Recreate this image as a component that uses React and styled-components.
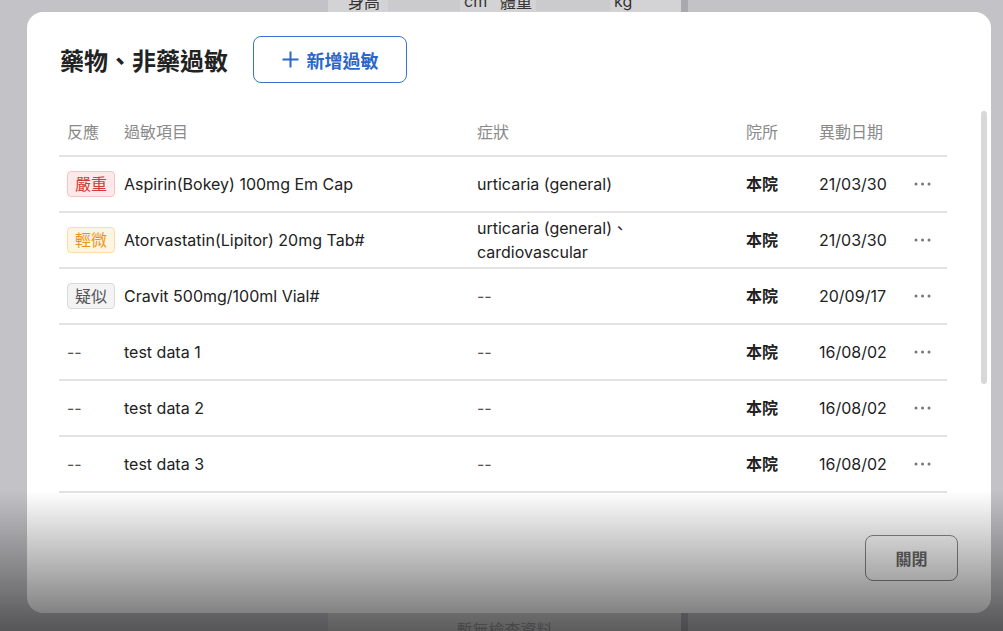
import React from 'react'
import styled, { createGlobalStyle } from 'styled-components'

const Global = createGlobalStyle`
  body {
    margin: 0;
    background: #c3c3c7;
    font-family: Inter, "Noto Sans CJK TC", sans-serif;
    overflow: hidden;
  }
  * { box-sizing: border-box; }
`

const BgPage = styled.div`
    display: flex;
    height: 100vh;
    padding-left: 328px;
`
const BgColumn = styled.div`
    width: 360px;
    background-color: #d3d3d5;
    border-right: 7px solid #a9a9ad;
    display: flex;
    flex-direction: column;
    justify-content: space-between;
    overflow: hidden;
`
const BgRow = styled.div`
    display: flex;
    align-items: center;
    height: 20px;
    margin-top: -9px;
    padding-left: 20px;
    font-size: 16px;
    color: #333;
`
const BgLabel = styled.span`
    width: ${p => p.w}px;
`
const BgInput = styled.div`
    width: ${p => p.w}px;
    height: 20px;
    background-color: #cbcbcd;
    margin-right: 4px;
`
const BgEmpty = styled.div`
    text-align: center;
    font-size: 16px;
    color: #9a9a9a;
    margin-bottom: -8px;
    height: 22px;
`

const Modal = styled.div`
    position: fixed;
    left: 27px;
    top: 12px;
    width: 964px;
    height: 601px;
    background-color: #ffffff;
    border-radius: 16px;
    display: flex;
    flex-direction: column;
    padding: 24px 44px 32px 32px;
`
const Header = styled.div`
    display: flex;
    align-items: center;
    gap: 25px;
    padding-left: 1px;
`
const Title = styled.h1`
    margin: 0;
    font-size: 24px;
    font-weight: 700;
    color: #222;
`
const AddButton = styled.button`
    width: 154px;
    height: 47px;
    border: 1px solid #3b72cc;
    border-radius: 8px;
    background: #fff;
    color: #2b66c9;
    font-family: inherit;
    font-size: 18px;
    font-weight: 600;
    display: flex;
    align-items: center;
    justify-content: center;
    gap: 8px;
    padding: 0;
`
const TableArea = styled.div`
    flex: 1;
    margin-top: 25px;
    overflow: hidden;
`
const Row = styled.div`
    display: grid;
    grid-template-columns: 57px 353px 269px 73px 95px 41px;
    align-items: center;
    min-height: ${p => (p.head ? 49 : 56)}px;
    border-bottom: 2px solid #e3e3e3;
    font-size: 16px;
    color: ${p => (p.head ? '#8a8a8a' : '#222')};
`
const Cell = styled.div`
    padding-left: 8px;
    line-height: 24px;
    font-weight: ${p => (p.bold ? 700 : 400)};
    display: flex;
    align-items: center;
`
const Dash = styled.span`
    color: #555;
`
const Badge = styled.span`
    display: inline-flex;
    align-items: center;
    justify-content: center;
    width: 48px;
    height: 26px;
    border-radius: 4px;
    font-size: 16px;
    border: 1px solid ${p => p.border};
    background-color: ${p => p.bg};
    color: ${p => p.color};
`
const Footer = styled.div`
    display: flex;
    justify-content: flex-end;
    margin-right: -11px;
`
const CloseButton = styled.button`
    width: 93px;
    height: 46px;
    border: 1px solid #8a8a8a;
    border-radius: 8px;
    background: #fff;
    color: #6b6b6b;
    font-family: inherit;
    font-size: 16px;
    font-weight: 700;
`
const ScrollThumb = styled.div`
    position: absolute;
    right: 4px;
    top: 99px;
    width: 6px;
    height: 273px;
    border-radius: 3px;
    background-color: #d8d8d8;
`
const Shade = styled.div`
    position: fixed;
    left: 0;
    right: 0;
    bottom: 0;
    height: 141px;
    pointer-events: none;
    background: linear-gradient(to bottom, rgba(0,0,0,0) 0%, rgba(0,0,0,0.3) 55%, rgba(0,0,0,0.56) 100%);
`

const levels = {
    '嚴重': { bg: '#fde9e9', border: '#f4c4c4', color: '#d03c3a' },
    '輕微': { bg: '#fff5e3', border: '#f9dcaa', color: '#e8941a' },
    '疑似': { bg: '#f3f3f4', border: '#d9d9db', color: '#555' },
}

const rows = [
    { level: '嚴重', item: 'Aspirin(Bokey) 100mg Em Cap', symptom: 'urticaria (general)', date: '21/03/30' },
    { level: '輕微', item: 'Atorvastatin(Lipitor) 20mg Tab#', symptom: 'urticaria (general)、cardiovascular', date: '21/03/30' },
    { level: '疑似', item: 'Cravit 500mg/100ml Vial#', symptom: null, date: '20/09/17' },
    { level: null, item: 'test data 1', symptom: null, date: '16/08/02' },
    { level: null, item: 'test data 2', symptom: null, date: '16/08/02' },
    { level: null, item: 'test data 3', symptom: null, date: '16/08/02' },
]

function Dots() {
    return (
        <svg width="17" height="4" viewBox="0 0 17 4" style={{ display: 'block' }}>
            <circle cx="2" cy="2" r="1.5" fill="#777" />
            <circle cx="8.5" cy="2" r="1.5" fill="#777" />
            <circle cx="15" cy="2" r="1.5" fill="#777" />
        </svg>
    )
}

function Plus() {
    return (
        <svg width="17" height="17" viewBox="0 0 17 17" style={{ display: 'block' }}>
            <path d="M8.5 0.5v16M0.5 8.5h16" stroke="#2b66c9" strokeWidth="2" />
        </svg>
    )
}

export default function App() {
  return (
    <>
      <Global />
      <BgPage>
        <BgColumn>
          <BgRow>
            <BgLabel w={40}>身高</BgLabel>
            <BgInput w={72} />
            <BgLabel w={36}>cm</BgLabel>
            <BgLabel w={36}>體重</BgLabel>
            <BgInput w={74} />
            <BgLabel w={30}>kg</BgLabel>
          </BgRow>
          <BgEmpty>暫無檢查資料</BgEmpty>
        </BgColumn>
      </BgPage>
      <Modal>
        <Header>
          <Title>藥物、非藥過敏</Title>
          <AddButton><Plus />新增過敏</AddButton>
        </Header>
        <TableArea>
          <Row head>
            <Cell>反應</Cell>
            <Cell>過敏項目</Cell>
            <Cell>症狀</Cell>
            <Cell>院所</Cell>
            <Cell>異動日期</Cell>
            <Cell />
          </Row>
          {rows.map((r) => (
            <Row key={r.item}>
              <Cell>
                {r.level ? <Badge {...levels[r.level]}>{r.level}</Badge> : <Dash>--</Dash>}
              </Cell>
              <Cell>{r.item}</Cell>
              <Cell>{r.symptom || <Dash>--</Dash>}</Cell>
              <Cell bold>本院</Cell>
              <Cell>{r.date}</Cell>
              <Cell><Dots /></Cell>
            </Row>
          ))}
        </TableArea>
        <Footer>
          <CloseButton>關閉</CloseButton>
        </Footer>
        <ScrollThumb />
      </Modal>
      <Shade />
    </>
  )
}
